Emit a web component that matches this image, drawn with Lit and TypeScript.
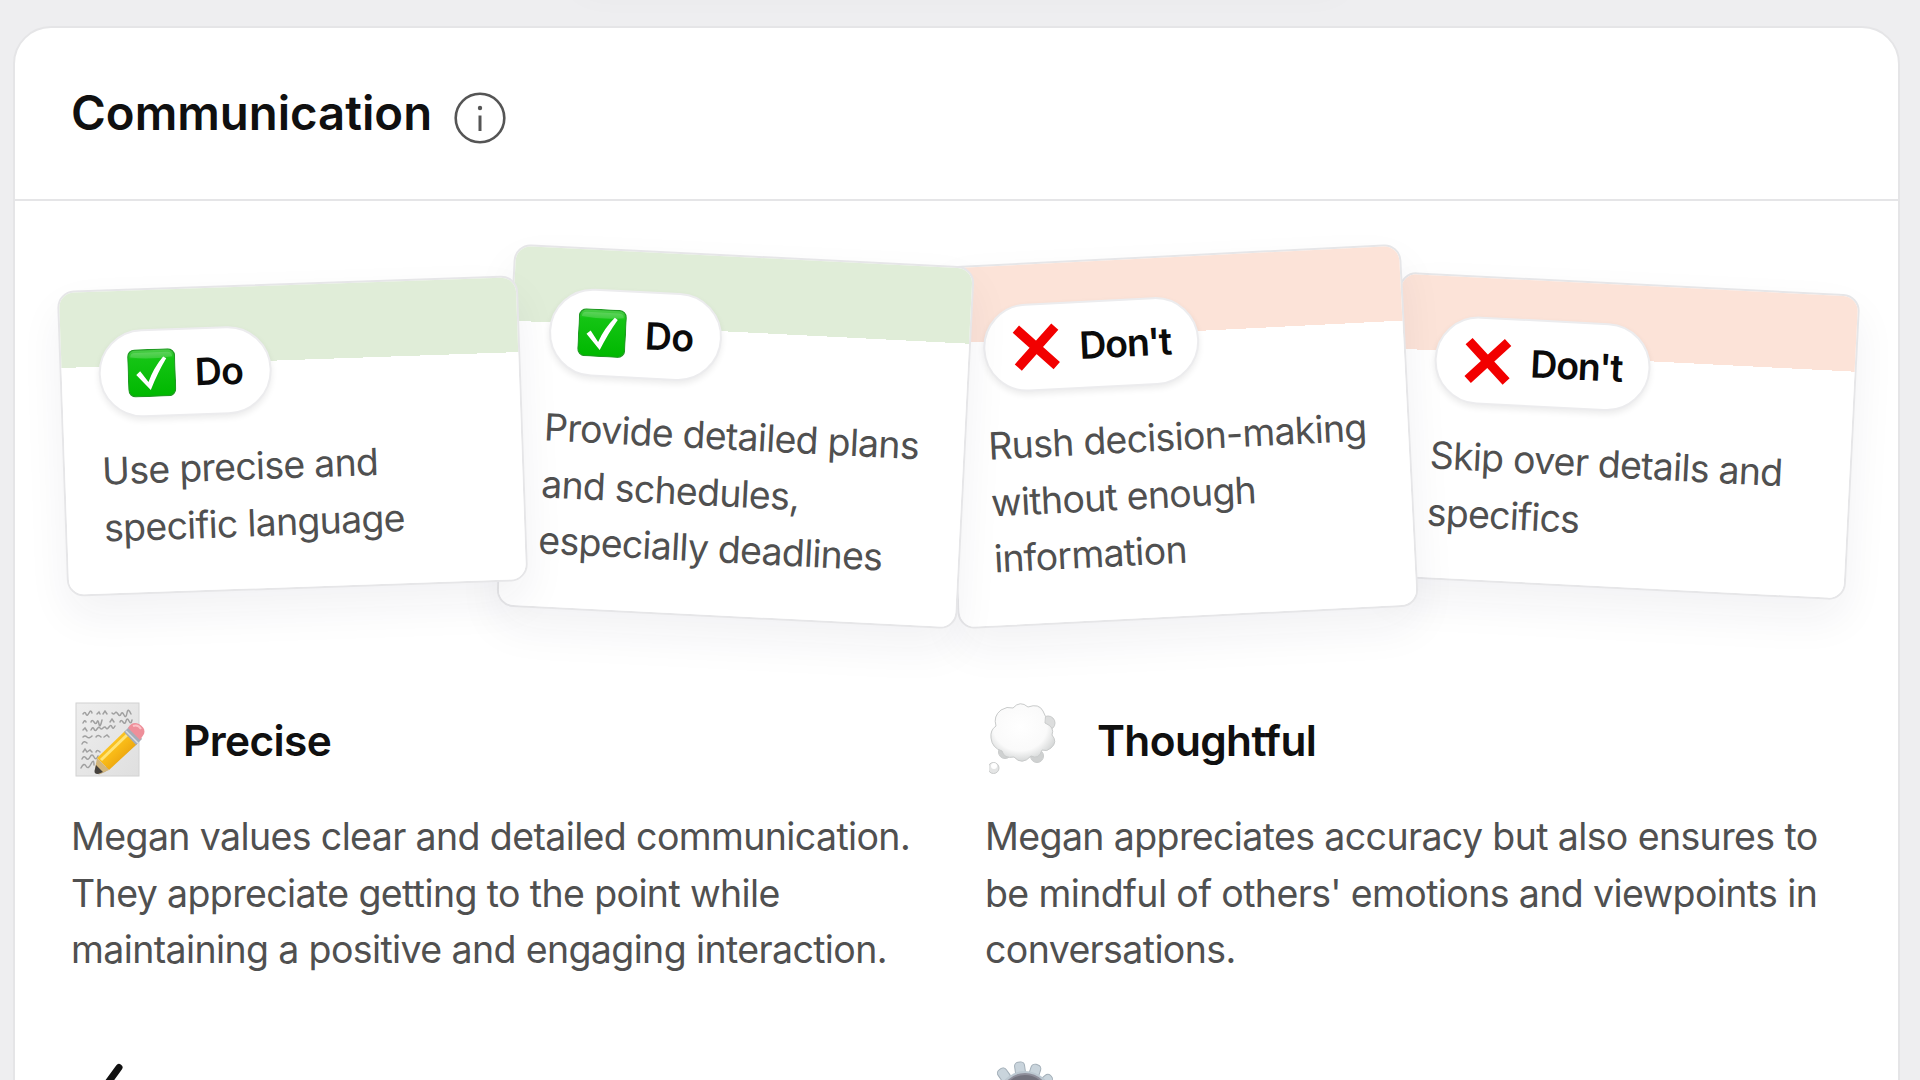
import { LitElement, css, html, svg, nothing } from 'lit';
import { customElement, property } from 'lit/decorators.js';
import { styleMap } from 'lit/directives/style-map.js';

interface Tip {
  kind: 'do' | 'dont';
  text: string;
  tilt: number;
}

interface Trait {
  icon: string;
  title: string;
  text: string;
}

// Line breaks are kept as written, see white-space in the styles
const TIPS: Tip[] = [
  { kind: 'do', text: 'Use precise and\nspecific language', tilt: -2 },
  { kind: 'do', text: 'Provide detailed plans\nand schedules,\nespecially deadlines', tilt: 2.9 },
  { kind: 'dont', text: 'Rush decision-making\nwithout enough\ninformation', tilt: -2.9 },
  { kind: 'dont', text: 'Skip over details and\nspecifics', tilt: 2.9 },
];

const TRAITS: Trait[] = [
  {
    icon: 'memo',
    title: 'Precise',
    text: 'Megan values clear and detailed communication.\nThey appreciate getting to the point while\nmaintaining a positive and engaging interaction.',
  },
  {
    icon: 'thought',
    title: 'Thoughtful',
    text: "Megan appreciates accuracy but also ensures to\nbe mindful of others' emotions and viewpoints in\nconversations.",
  },
  { icon: 'check', title: '', text: '' },
  { icon: 'gear', title: '', text: '' },
];

const checkBox = svg`
  <defs>
    <linearGradient id="g" x1="0" y1="0" x2="0" y2="1">
      <stop offset="0" stop-color="#4fcc4c" />
      <stop offset="0.2" stop-color="#14c414" />
      <stop offset="1" stop-color="#00b800" />
    </linearGradient>
  </defs>
  <rect x="0.6" y="0.6" width="46.8" height="46.8" rx="7" fill="url(#g)" stroke="#1f9a22" stroke-width="1.2" />
  <path d="M3 8Q3 3.500 8 3.500H40Q45 3.500 45 8Q24 11 3 8Z" fill="#fff" opacity="0.16" />
  <path d="M8.500 25.500L12.500 22L20.500 33Q26 19 36 8L39 10Q30 24 22.500 41Z" fill="#fff" />
`;

const cross = svg`
  <path d="M4.500 5L43.500 43.500M43.500 4.500L5 43.500" fill="none" stroke="#f20000" stroke-width="9.500" />
`;

const memo = svg`
  <defs>
    <linearGradient id="paper" x1="0" y1="0" x2="1" y2="1">
      <stop offset="0" stop-color="#eeeeee" />
      <stop offset="1" stop-color="#dfdfdf" />
    </linearGradient>
    <linearGradient id="wood" x1="0" y1="0" x2="1" y2="1">
      <stop offset="0" stop-color="#ffd83f" />
      <stop offset="0.5" stop-color="#f8b916" />
      <stop offset="1" stop-color="#d98a08" />
    </linearGradient>
  </defs>
  <rect x="1" y="1" width="63" height="73" fill="url(#paper)" stroke="#d2d2d2" />
  <g fill="none" stroke="#a0a0a0" stroke-width="1.500" stroke-linecap="round">
    <path d="M8 12q2-3 3 0t3-1 3 0M22 12l2-2 1 2M28 12l2-3 2 3M37 11q2 2 3 0t3 1 3 0 3 1 3-2 4 1" />
    <path d="M8 21q2-4 3-1M16 20q1-3 3 0t3 0 2 2 3-4M35 20l2-3 2 3M45 20q1-3 3 0t3-1 3 0 3-1" />
    <path d="M8 28l2-2 2 3M16 28q2-4 3-1t3 0 3-1 3 0 3 0 3-1 3 0 3-1" />
    <path d="M8 35q2-2 4 0t5-1M21 35q2-3 5 0M29 35l3-2 2 2M7 42q2-4 5-1" />
    <path d="M8 50l2-3 2 3 3-2 2 2M21 50q1-3 4 0M7 57q2-4 4-1t4-1 4 0 4-1M6 66q3-6 5-2t5-2 3 1" />
  </g>
  <path d="M23 73L30 70 61 43 67 36 60 35Z" fill="#777" opacity="0.450" />
  <path d="M22 56L50 29L62 42L34 68Z" fill="url(#wood)" />
  <path d="M26 58L52 33" stroke="#ffe476" stroke-width="3" />
  <path d="M22 56L34 68L25 72Q19 72 20 67Z" fill="#d3b67c" />
  <path d="M21 63L28 70L23 72Q18 72 20 67Z" fill="#45413d" />
  <path d="M49 30L54 25L67 37L61 43Z" fill="#a4adb8" />
  <path d="M51 29L63 41" stroke="#d8dee5" stroke-width="1.500" />
  <path d="M53 26Q57 19 64 22Q71 26 69 32L65 38Z" fill="#ee8f9a" />
  <path d="M58 24Q63 22 66 27" fill="none" stroke="#fbc2c7" stroke-width="2" />
`;

const thought = svg`
  <defs>
    <radialGradient id="puff" cx="0.46" cy="0.4" r="0.6">
      <stop offset="0" stop-color="#fff" />
      <stop offset="0.700" stop-color="#fafafa" />
      <stop offset="1" stop-color="#d6d8d8" />
    </radialGradient>
  </defs>
  <g stroke="#c9cbcb" stroke-width="1">
    <circle cx="59" cy="21" r="7" fill="#dcdddd" />
    <circle cx="16" cy="50" r="6.500" fill="#cfd1d1" />
    <circle cx="48" cy="54" r="6.500" fill="#cfd1d1" />
    <path
      d="M24 6Q31-2 39 5Q50 1 54 9Q58 14 56 21Q66 25 63 33Q69 40 62 46Q58 50 53 48Q50 58 42 54Q33 64 25 55Q15 57 13 49Q3 46 2 36Q1 28 7 24Q4 14 12 8Q18 4 24 6Z"
      fill="url(#puff)"
    />
    <circle cx="4.500" cy="66" r="5.500" fill="#e4e5e5" />
  </g>
  <circle cx="5" cy="64" r="3" fill="#fff" />
`;

const check = svg`
  <path d="M44 6.500L32 23L15 54" fill="none" stroke="#111" stroke-width="7" stroke-linecap="round" />
`;

const gear = svg`
  <g fill="#c9d4dc" stroke="#a3afb8" stroke-width="1">
    <rect x="26" y="1" width="10" height="14" rx="4" transform="rotate(-8 31 8)" />
    <rect x="41" y="3" width="10" height="14" rx="4" transform="rotate(18 45 10)" />
    <rect x="54" y="13" width="9" height="14" rx="4" transform="rotate(50 58 18)" />
    <rect x="10" y="7" width="10" height="14" rx="4" transform="rotate(-35 15 14)" />
  </g>
  <circle cx="36" cy="38" r="28" fill="#bcc8d1" />
  <circle cx="36" cy="37" r="24" fill="#73737e" stroke="#8f8f9b" stroke-width="2" />
`;

const ICONS = { memo, thought, check, gear };

@customElement('tip-card')
class TipCard extends LitElement {
  @property()
  kind: 'do' | 'dont' = 'do';

  @property()
  text = '';

  static styles = css`
    :host {
      display: block;
      box-sizing: border-box;
      width: 461px;
      border: 2px solid #e6e6e8;
      border-radius: 17px;
      background: #fff;
      box-shadow: 0 20px 44px rgba(30, 30, 60, 0.06);
      position: relative;
    }

    .card {
      border-radius: 15px;
      padding: 39px 37px 36px;
      background: linear-gradient(#e0edd8 75px, #fff 75px);
    }

    .card.dont {
      background: linear-gradient(#fce3d8 75px, #fff 75px);
    }

    .pill {
      display: inline-flex;
      align-items: center;
      gap: 19px;
      box-sizing: border-box;
      height: 88px;
      padding: 0 26px 0 27px;
      border: 2px solid #ececee;
      border-radius: 44px;
      background: #fff;
      box-shadow: 0 3px 6px rgba(0, 0, 0, 0.08);
      color: #0b0b0b;
      font-size: 37.500px;
      font-weight: 600;
    }

    .dont .pill {
      letter-spacing: -1.200px;
    }

    .pill svg {
      width: 48px;
      height: 48px;
    }

    .text {
      margin: 25px 0 0;
      padding-bottom: 1px;
      color: #505050;
      letter-spacing: -0.750px;
      line-height: 56.600px;
      white-space: pre;
    }
  `;

  render() {
    return html`
      <div class="card ${this.kind}">
        <div class="pill">
          <svg viewBox="0 0 48 48">${this.kind === 'do' ? checkBox : cross}</svg>
          <span>${this.kind === 'do' ? 'Do' : "Don't"}</span>
        </div>
        <p class="text">${this.text}</p>
      </div>
    `;
  }
}

@customElement('app-root')
class AppRoot extends LitElement {
  static styles = css`
    :host {
      display: block;
      position: relative;
      box-sizing: border-box;
      height: 1080px;
      overflow: hidden;
      padding: 26px 20px 0 13px;
      background: #eeeef0;
      font-family: Inter, 'Liberation Sans', sans-serif;
      font-size: 37.500px;
      letter-spacing: -0.620px;
      color: #505050;
    }

    /* shadow that falls from the section scrolled out above */
    .above {
      position: absolute;
      top: -40px;
      left: 580px;
      width: 760px;
      height: 30px;
      box-shadow: 0 0 36px rgba(0, 0, 0, 0.04);
    }

    .panel {
      position: relative;
      box-sizing: border-box;
      height: 1200px;
      border: 2px solid #e5e5e7;
      border-radius: 38px;
      background: #fff;
    }

    .header {
      display: flex;
      align-items: center;
      gap: 22px;
      box-sizing: border-box;
      height: 173px;
      padding: 0 56px 2px;
      border-bottom: 2px solid #e5e5e7;
    }

    h2,
    h3 {
      margin: 0;
      color: #101010;
      font-weight: 600;
    }

    h2 {
      font-size: 47.300px;
      letter-spacing: 0;
    }

    .info {
      width: 52px;
      height: 52px;
      margin-top: 10px;
    }

    .tips {
      display: flex;
      align-items: center;
      justify-content: center;
      height: 470px;
      padding-left: 2px;
    }

    .tips tip-card {
      flex: none;
      margin: 0 -8.700px;
    }

    .traits {
      display: grid;
      grid-template-columns: 1fr 1fr;
      gap: 80px 57px;
      padding: 29px 56px 0;
    }

    .trait-head {
      display: flex;
      align-items: center;
      gap: 38px;
      height: 80px;
      padding-left: 4px;
    }

    .trait-head svg {
      width: 70px;
      height: 76px;
    }

    h3 {
      font-size: 42.400px;
    }

    .trait p {
      margin: 29px 0 0;
      line-height: 56.600px;
      white-space: pre;
    }
  `;

  renderTrait(trait: Trait) {
    return html`
      <div class="trait">
        <div class="trait-head">
          <svg viewBox="0 0 70 76">${ICONS[trait.icon]}</svg>
          <h3>${trait.title}</h3>
        </div>
        ${trait.text ? html`<p>${trait.text}</p>` : nothing}
      </div>
    `;
  }

  render() {
    return html`
      <div class="above"></div>
      <div class="panel">
        <div class="header">
          <h2>Communication</h2>
          <svg class="info" viewBox="0 0 52 52" fill="none" stroke="#555">
            <circle cx="26" cy="26" r="24.300" stroke-width="2.600" />
            <path d="M26 23.500V39" stroke-width="3" />
            <circle cx="26" cy="16" r="2.200" fill="#555" stroke="none" />
          </svg>
        </div>
        <div class="tips">
          ${TIPS.map((tip, i) => html`
            <tip-card
              .kind=${tip.kind}
              .text=${tip.text}
              style=${styleMap({ transform: `rotate(${tip.tilt}deg)`, zIndex: String(TIPS.length - i) })}
            ></tip-card>
          `)}
        </div>
        <div class="traits">${TRAITS.map((trait) => this.renderTrait(trait))}</div>
      </div>
    `;
  }
}
